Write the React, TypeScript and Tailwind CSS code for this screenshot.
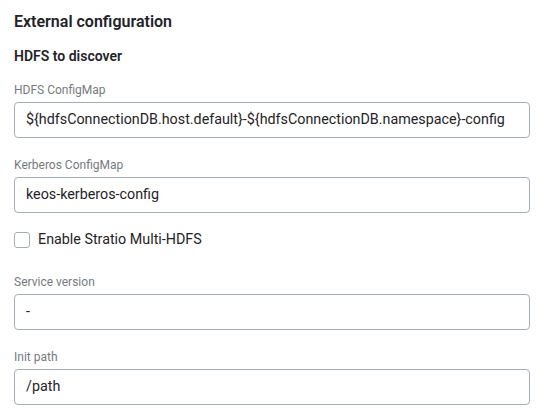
import React, { useState } from 'react';

const fields = [
  { id: 'hdfs', label: 'HDFS ConfigMap', value: '${hdfsConnectionDB.host.default}-${hdfsConnectionDB.namespace}-config' },
  { id: 'kerberos', label: 'Kerberos ConfigMap', value: 'keos-kerberos-config' },
];

const moreFields = [
  { id: 'version', label: 'Service version', value: '-' },
  { id: 'path', label: 'Init path', value: '/path' },
];

const Field: React.FC<{ label: string; value: string }> = ({ label, value }) => (
  <div className="flex flex-col">
    <label className="text-[12px] leading-4 text-[#757a82] mb-[4px]">{label}</label>
    <div className="h-[36px] w-[516px] rounded-[4px] border border-[#a4adb8] bg-white pl-[11px] flex items-center text-[14.3px] text-[#1f2328] whitespace-nowrap overflow-hidden">
      {value}
    </div>
  </div>
);

export default function App() {
  const [multi, setMulti] = useState(false);

  return (
    <div className="bg-white min-h-[418px] px-[14px] pt-[10px] font-['Roboto',sans-serif]">
      <h2 className="text-[16px] leading-6 font-semibold text-[#1f2328]">External configuration</h2>
      <h3 className="mt-[12px] text-[14px] leading-5 font-semibold text-[#1f2328]">HDFS to discover</h3>

      <div className="mt-[16px] flex flex-col gap-[19px]">
        {fields.map(f => (
          <Field key={f.id} label={f.label} value={f.value} />
        ))}

        <label className="flex items-center h-[16px] gap-[8px] cursor-pointer">
          <span
            onClick={() => setMulti(!multi)}
            className="w-[16px] h-[16px] rounded-[3px] border border-[#a4adb8] bg-white"
          />
          <span className="text-[14.3px] text-[#1f2328]">Enable Stratio Multi-HDFS</span>
        </label>

        <div className="mt-[7px] flex flex-col gap-[19px]">
          {moreFields.map(f => (
            <Field key={f.id} label={f.label} value={f.value} />
          ))}
        </div>
      </div>
    </div>
  );
}
